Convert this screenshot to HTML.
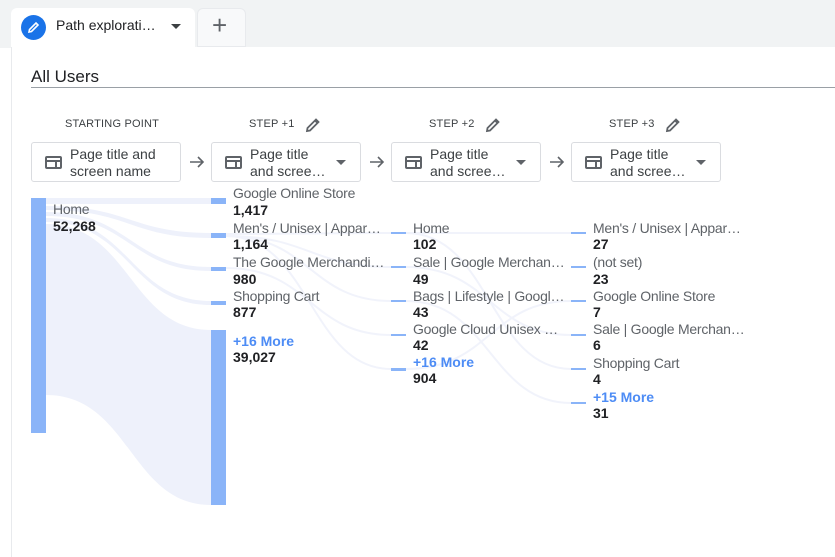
<!DOCTYPE html>
<html><head><style>
*{margin:0;padding:0;box-sizing:border-box}
body{width:835px;height:548px;background:#fff;font-family:"Liberation Sans",Arial,sans-serif;position:relative;overflow:hidden;color:#202124}
.a{position:absolute;white-space:nowrap}
.top{position:absolute;left:0;top:0;width:835px;height:48px;background:#f1f3f4}
.main{position:absolute;left:11px;top:47px;width:830px;height:510px;background:#fff;border-left:1px solid #e8eaed}
.lab{font-size:14px;color:#5f6368;line-height:16px;letter-spacing:-0.25px}
.num{font-size:14px;font-weight:bold;color:#202124;line-height:16px}
.more{font-size:14px;font-weight:bold;color:#4d8cf5;line-height:16px}
.hd{font-size:11px;color:#3c4043;letter-spacing:.2px}
.box{position:absolute;top:142px;width:150px;height:40px;border:1px solid #dadce0;border-radius:3px;background:#fff}
.box .t{position:absolute;left:38px;top:3px;font-size:14px;line-height:17px;color:#3c4043}
.box .ic{position:absolute;left:13px;top:13px;width:17px;height:13px;border:2px solid #5f6368;border-radius:2px}
.box .ic:before{content:"";position:absolute;left:0;right:0;top:2px;border-top:2px solid #5f6368}
.box .ic:after{content:"";position:absolute;left:8px;top:4px;height:5px;border-left:2px solid #5f6368}
.dd{position:absolute;right:14px;top:17px;width:0;height:0;border-left:5px solid transparent;border-right:5px solid transparent;border-top:5px solid #5f6368}
.bar{position:absolute;background:#8ab4f8}
</style></head><body>
<div class="top"></div>
<div class="a" style="left:11px;top:8px;width:184px;height:40px;background:#fff;border-radius:6px 6px 0 0"></div>
<div class="a" style="left:21px;top:15px;width:25px;height:25px;border-radius:50%;background:#1a73e8"></div>
<svg class="a" style="left:26px;top:20px" width="15" height="15" viewBox="0 0 15 15"><path d="M3 12 L3.5 9.5 L10 3 L12 5 L5.5 11.5 Z" fill="none" stroke="#fff" stroke-width="1.6"/></svg>
<div class="a" style="left:56px;top:17px;font-size:14px;color:#202124">Path explorati…</div>
<div class="a" style="left:171px;top:24px;border-left:5px solid transparent;border-right:5px solid transparent;border-top:5px solid #3c4043"></div>
<div class="a" style="left:197px;top:8px;width:49px;height:39px;background:#f8f9fa;border-radius:6px 6px 0 0;border:1px solid #e8eaed"></div>
<div class="a" style="left:212px;top:10px;font-size:26px;color:#5f6368;font-weight:300">+</div>
<div class="main"></div>
<div class="a" style="left:31px;top:67px;font-size:17px;color:#202124">All Users</div>
<div class="a" style="left:31px;top:87px;width:804px;height:1px;background:#9aa0a6"></div>

<div class="a hd" style="left:65px;top:118px">STARTING POINT</div>
<div class="a hd" style="left:249px;top:118px">STEP +1</div>
<div class="a hd" style="left:429px;top:118px">STEP +2</div>
<div class="a hd" style="left:609px;top:118px">STEP +3</div>
<svg class="a" style="left:305px;top:117px" width="16" height="16" viewBox="0 0 16 16"><path d="M2 14 L2.5 11 L11 2.5 L13.5 5 L5 13.5 Z M10 3.5 L12.5 6" fill="none" stroke="#5f6368" stroke-width="1.8"/></svg>
<svg class="a" style="left:485px;top:117px" width="16" height="16" viewBox="0 0 16 16"><path d="M2 14 L2.5 11 L11 2.5 L13.5 5 L5 13.5 Z M10 3.5 L12.5 6" fill="none" stroke="#5f6368" stroke-width="1.8"/></svg>
<svg class="a" style="left:665px;top:117px" width="16" height="16" viewBox="0 0 16 16"><path d="M2 14 L2.5 11 L11 2.5 L13.5 5 L5 13.5 Z M10 3.5 L12.5 6" fill="none" stroke="#5f6368" stroke-width="1.8"/></svg>

<div class="box" style="left:31px"><div class="ic"></div><div class="t">Page title and<br>screen name</div></div>
<div class="box" style="left:211px"><div class="ic"></div><div class="t">Page title<br>and scree…</div><div class="dd"></div></div>
<div class="box" style="left:391px"><div class="ic"></div><div class="t">Page title<br>and scree…</div><div class="dd"></div></div>
<div class="box" style="left:571px"><div class="ic"></div><div class="t">Page title<br>and scree…</div><div class="dd"></div></div>
<svg class="a" style="left:189px;top:155px" width="16" height="14"><path d="M1 7H14M9 2L14 7L9 12" fill="none" stroke="#5f6368" stroke-width="1.6"/></svg>
<svg class="a" style="left:369px;top:155px" width="16" height="14"><path d="M1 7H14M9 2L14 7L9 12" fill="none" stroke="#5f6368" stroke-width="1.6"/></svg>
<svg class="a" style="left:549px;top:155px" width="16" height="14"><path d="M1 7H14M9 2L14 7L9 12" fill="none" stroke="#5f6368" stroke-width="1.6"/></svg>

<svg class="a" style="left:0;top:0" width="835" height="548">
<g fill="#eef1fb">
<path d="M46 198 C130 198 130 198 211 198 L211 204 C130 204 130 204 46 204Z"/>
<path d="M46 206 C130 206 130 233 211 233 L211 238 C130 238 130 210 46 210Z"/>
<path d="M46 212 C130 212 130 267 211 267 L211 271 C130 271 130 216 46 216Z"/>
<path d="M46 218 C130 218 130 301 211 301 L211 305 C130 305 130 222 46 222Z"/>
<path d="M46 224 C130 224 130 330 211 330 L211 505 C130 505 130 395 46 395Z"/>
</g>
<g fill="none" stroke="#f1f3fb" stroke-width="2">
<path d="M226 234 C310 234 310 233 391 233"/>
<path d="M226 236 C310 236 310 267 391 267"/>
<path d="M226 236 C310 236 310 301 391 301"/>
<path d="M226 268 C310 268 310 335 391 335"/>
<path d="M226 236 C310 236 310 369 391 369"/>
<path d="M406 233 C490 233 490 233 571 233"/>
<path d="M406 233 C490 233 490 369 571 369"/>
<path d="M406 267 C490 267 490 335 571 335"/>
<path d="M406 301 C490 301 490 403 571 403"/>
<path d="M406 369 C490 369 490 301 571 301"/>
</g>
</svg>

<div class="bar" style="left:31px;top:198px;width:15px;height:235px"></div>
<div class="bar" style="left:211px;top:198px;width:15px;height:6px"></div>
<div class="bar" style="left:211px;top:233px;width:15px;height:5px"></div>
<div class="bar" style="left:211px;top:267px;width:15px;height:4px"></div>
<div class="bar" style="left:211px;top:301px;width:15px;height:4px"></div>
<div class="bar" style="left:211px;top:330px;width:15px;height:175px"></div>
<div class="bar" style="left:391px;top:232px;width:15px;height:2px"></div>
<div class="bar" style="left:391px;top:266px;width:15px;height:2px"></div>
<div class="bar" style="left:391px;top:300px;width:15px;height:2px"></div>
<div class="bar" style="left:391px;top:334px;width:15px;height:2px"></div>
<div class="bar" style="left:391px;top:368px;width:15px;height:3px"></div>
<div class="bar" style="left:571px;top:232px;width:15px;height:2px"></div>
<div class="bar" style="left:571px;top:266px;width:15px;height:2px"></div>
<div class="bar" style="left:571px;top:300px;width:15px;height:2px"></div>
<div class="bar" style="left:571px;top:334px;width:15px;height:2px"></div>
<div class="bar" style="left:571px;top:368px;width:15px;height:2px"></div>
<div class="bar" style="left:571px;top:402px;width:15px;height:2px"></div>

<div class="a lab" style="left:53px;top:201px">Home</div><div class="a num" style="left:53px;top:218px">52,268</div>

<div class="a lab" style="left:233px;top:185px">Google Online Store</div><div class="a num" style="left:233px;top:202px">1,417</div>
<div class="a lab" style="left:233px;top:220px">Men's / Unisex | Appar…</div><div class="a num" style="left:233px;top:236px">1,164</div>
<div class="a lab" style="left:233px;top:254px">The Google Merchandi…</div><div class="a num" style="left:233px;top:271px">980</div>
<div class="a lab" style="left:233px;top:288px">Shopping Cart</div><div class="a num" style="left:233px;top:304px">877</div>
<div class="a more" style="left:233px;top:333px">+16 More</div><div class="a num" style="left:233px;top:349px">39,027</div>

<div class="a lab" style="left:413px;top:220px">Home</div><div class="a num" style="left:413px;top:236px">102</div>
<div class="a lab" style="left:413px;top:254px">Sale | Google Merchan…</div><div class="a num" style="left:413px;top:271px">49</div>
<div class="a lab" style="left:413px;top:288px">Bags | Lifestyle | Googl…</div><div class="a num" style="left:413px;top:304px">43</div>
<div class="a lab" style="left:413px;top:321px">Google Cloud Unisex …</div><div class="a num" style="left:413px;top:337px">42</div>
<div class="a more" style="left:413px;top:354px">+16 More</div><div class="a num" style="left:413px;top:370px">904</div>

<div class="a lab" style="left:593px;top:220px">Men's / Unisex | Appar…</div><div class="a num" style="left:593px;top:236px">27</div>
<div class="a lab" style="left:593px;top:254px">(not set)</div><div class="a num" style="left:593px;top:271px">23</div>
<div class="a lab" style="left:593px;top:288px">Google Online Store</div><div class="a num" style="left:593px;top:304px">7</div>
<div class="a lab" style="left:593px;top:321px">Sale | Google Merchan…</div><div class="a num" style="left:593px;top:337px">6</div>
<div class="a lab" style="left:593px;top:355px">Shopping Cart</div><div class="a num" style="left:593px;top:371px">4</div>
<div class="a more" style="left:593px;top:389px">+15 More</div><div class="a num" style="left:593px;top:405px">31</div>
</body></html>
